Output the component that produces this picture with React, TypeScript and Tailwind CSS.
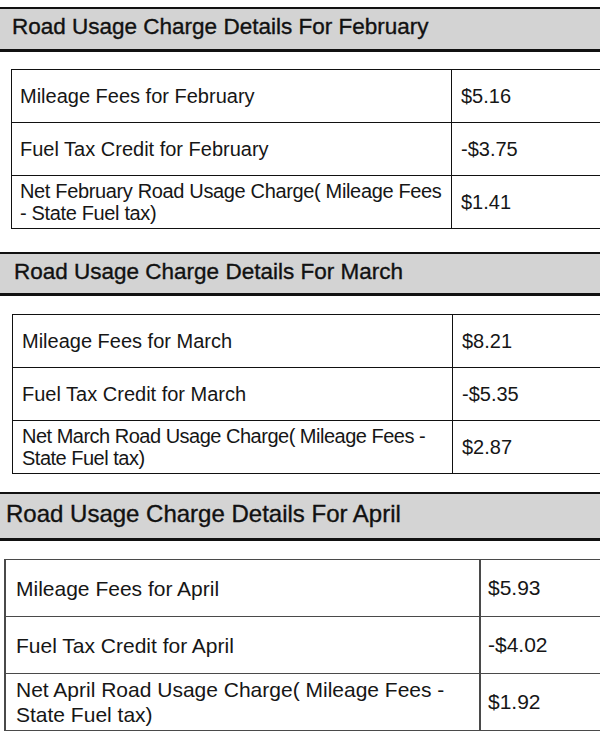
import React from "react";

type Row = { label: React.ReactNode; value: string };

const font = { fontFamily: '"Liberation Sans", Arial, sans-serif' };

function Section(props: {
  title: string;
  wrapCls: string;
  headerCls: string;
  titleCls: string;
  tableCls: string;
  rowCls: string;
  labelCls: string;
  valueCls: string;
  rows: Row[];
}) {
  return (
    <div className={props.wrapCls}>
      <div className={props.headerCls}>
        <div className={props.titleCls}>{props.title}</div>
      </div>
      <div className={props.tableCls}>
        {props.rows.map((r, i) => (
          <div key={i} className={props.rowCls}>
            <div className={props.labelCls}>{r.label}</div>
            <div className={props.valueCls}>{r.value}</div>
          </div>
        ))}
      </div>
    </div>
  );
}

export default function App() {
  return (
    <div className="w-[600px] h-[738px] bg-white text-[#161616] overflow-hidden" style={font}>
      <Section
        title="Road Usage Charge Details For February"
        wrapCls="pt-[7px]"
        headerCls="h-[45px] bg-[#d3d3d3] border-t-2 border-b-[3px] border-[#111]"
        titleCls="pl-[12px] pt-[5px] text-[22.5px] leading-[26px] text-[#111] whitespace-nowrap [-webkit-text-stroke:0.35px_#111]"
        tableCls="mt-[17px] ml-[11px] border-t border-l border-[#111]"
        rowCls="grid grid-cols-[439px_1fr] h-[53px] border-b border-[#111]"
        labelCls="flex items-center pl-[8px] text-[20px] leading-[22px] whitespace-nowrap"
        valueCls="flex items-center pl-[9px] border-l border-[#111] text-[20px]"
        rows={[
          { label: "Mileage Fees for February", value: "$5.16" },
          { label: "Fuel Tax Credit for February", value: "-$3.75" },
          {
            label: (
              <span className="tracking-[-0.35px]">
                Net February Road Usage Charge( Mileage Fees
                <br />- State Fuel tax)
              </span>
            ),
            value: "$1.41",
          },
        ]}
      />
      <Section
        title="Road Usage Charge Details For March"
        wrapCls="pt-[23px]"
        headerCls="h-[44px] bg-[#d3d3d3] border-t-2 border-b-[3px] border-[#111]"
        titleCls="pl-[14px] pt-[5px] text-[22.5px] leading-[26px] text-[#111] whitespace-nowrap [-webkit-text-stroke:0.35px_#111]"
        tableCls="mt-[18px] ml-[12px] border-t border-l border-[#111]"
        rowCls="grid grid-cols-[439px_1fr] h-[53px] border-b border-[#111]"
        labelCls="flex items-center pl-[9px] text-[20px] leading-[22px] whitespace-nowrap"
        valueCls="flex items-center pl-[9px] border-l border-[#111] text-[20px]"
        rows={[
          { label: "Mileage Fees for March", value: "$8.21" },
          { label: "Fuel Tax Credit for March", value: "-$5.35" },
          {
            label: (
              <span className="tracking-[-0.5px]">
                Net March Road Usage Charge( Mileage Fees -
                <br />
                State Fuel tax)
              </span>
            ),
            value: "$2.87",
          },
        ]}
      />
      <Section
        title="Road Usage Charge Details For April"
        wrapCls="pt-[18px]"
        headerCls="h-[49px] bg-[#d4d4d4] border-t-2 border-b-[3px] border-[#111]"
        titleCls="pl-[6px] pt-[6px] text-[24px] leading-[28px] text-[#111] whitespace-nowrap [-webkit-text-stroke:0.35px_#111]"
        tableCls="mt-[18px] ml-[4px] border-t border-l-2 border-[#4a4a4a]"
        rowCls="grid grid-cols-[473px_1fr] h-[57px] border-b border-[#4a4a4a]"
        labelCls="flex items-center pl-[10px] text-[21px] leading-[25px] whitespace-nowrap"
        valueCls="flex items-center pl-[7px] border-l-2 border-[#4a4a4a] text-[21px]"
        rows={[
          { label: "Mileage Fees for April", value: "$5.93" },
          { label: "Fuel Tax Credit for April", value: "-$4.02" },
          {
            label: (
              <span>
                Net April Road Usage Charge( Mileage Fees -
                <br />
                State Fuel tax)
              </span>
            ),
            value: "$1.92",
          },
        ]}
      />
    </div>
  );
}
